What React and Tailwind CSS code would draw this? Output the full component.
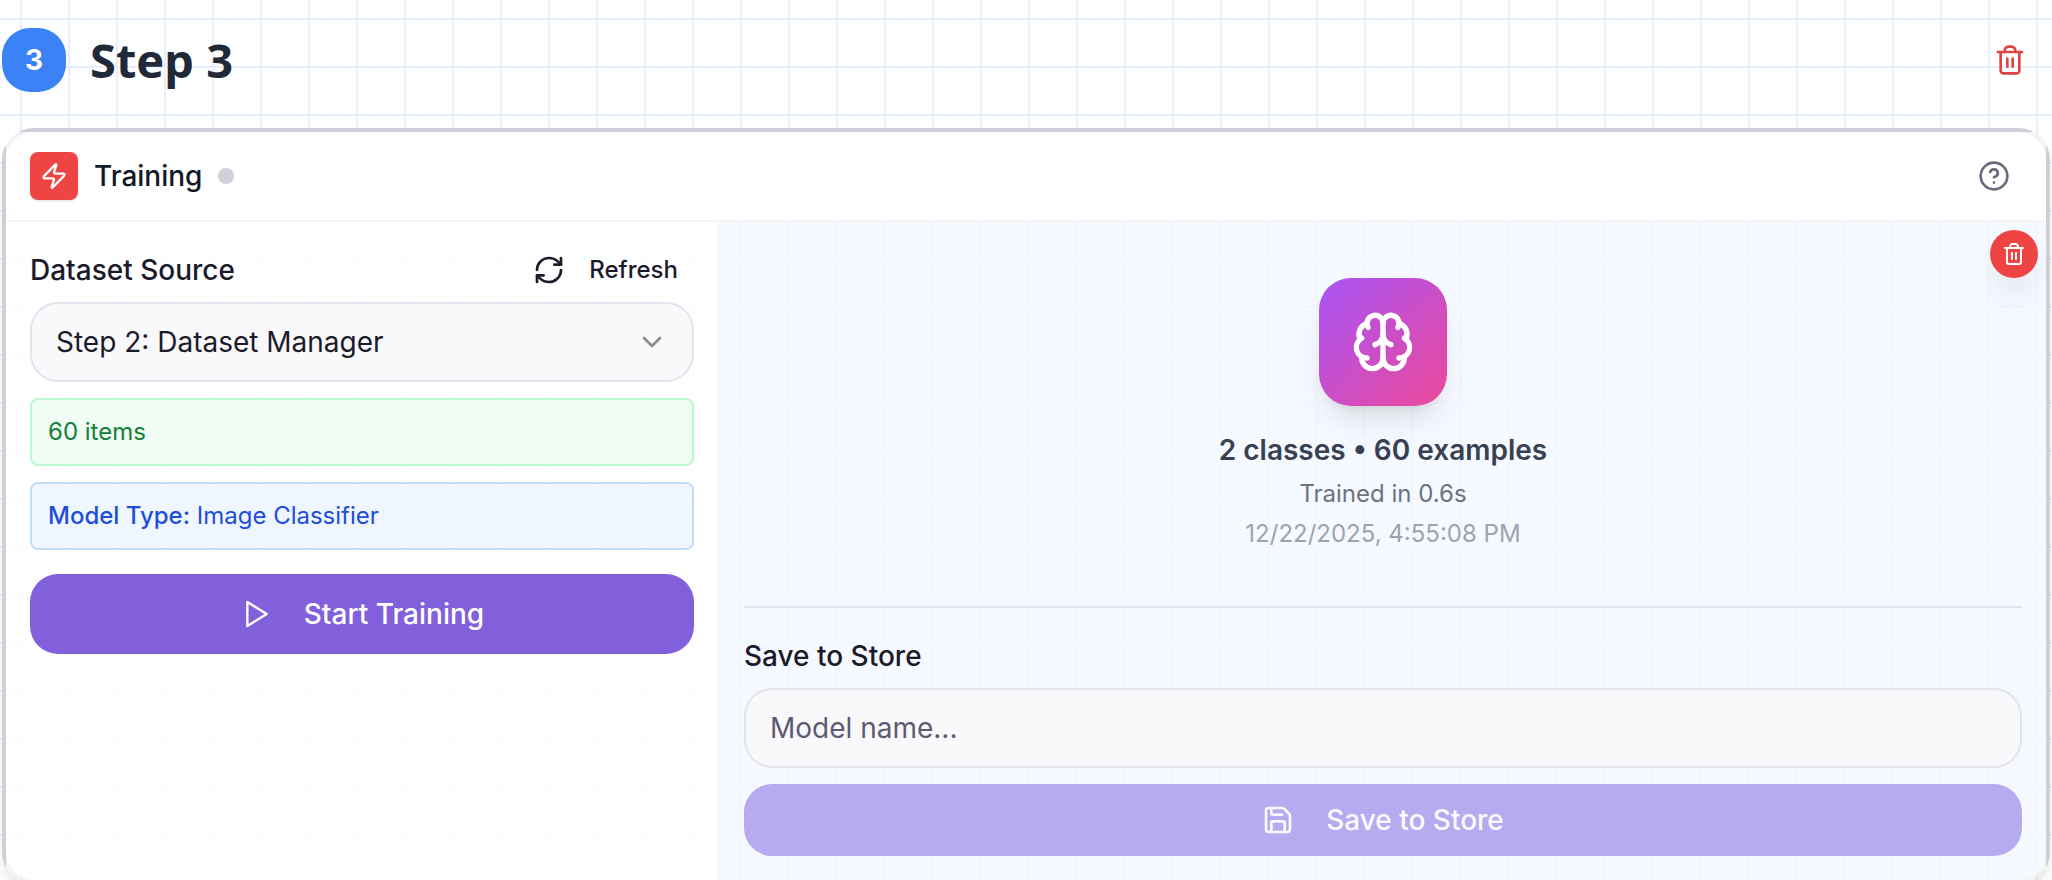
import { useState } from 'react';
import { Zap, CircleHelp, RefreshCw, ChevronDown, Brain, Save } from 'lucide-react';

/** Trash can with two inner bars. */
function TrashIcon({ className }) {
  return (
    <svg viewBox="0 0 24 24" fill="none" stroke="currentColor" strokeWidth="2" strokeLinecap="round" strokeLinejoin="round" className={className}>
      <path d="M3 6h18" />
      <path d="M19 6v14c0 1-1 2-2 2H7c-1 0-2-1-2-2V6" />
      <path d="M8 6V5c0-1.7 1.3-3 3-3h2c1.700 0 3 1.300 3 3v1" />
      <path d="M10 11v6" />
      <path d="M14 11v6" />
    </svg>
  );
}

/** Plain triangle with sharp corners. */
function PlayIcon({ className }) {
  return (
    <svg viewBox="0 0 24 24" fill="none" stroke="currentColor" strokeWidth="1.8" strokeLinejoin="round" className={className}>
      <path d="M5.500 3 20 12 5.500 21Z" />
    </svg>
  );
}

function StepHeader({ number, title }) {
  return (
    <header className="flex h-32 items-center pb-2 pl-0.5 pr-[26px]">
      <span className="flex size-16 items-center justify-center rounded-[28px] bg-[#3b82f6] text-[28px] font-bold text-white">
        {number}
      </span>
      <h1 className="ml-6 font-['Noto_Sans',sans-serif] text-[47px] font-bold leading-none text-[#1f2937]">{title}</h1>
      <button type="button" aria-label="Delete step" className="ml-auto text-[#dc4444]">
        <TrashIcon className="size-8" />
      </button>
    </header>
  );
}

function SourcePanel() {
  const [source, setSource] = useState('step-2');

  return (
    <section className="flex flex-col bg-white/60 p-6">
      <div className="flex h-12 items-center justify-between pr-4">
        <label htmlFor="source" className="text-[28px] font-medium leading-10">Dataset Source</label>
        <button type="button" className="flex items-center gap-6 text-2xl font-medium">
          <RefreshCw className="size-8" />
          Refresh
        </button>
      </div>
      <div className="relative mt-2">
        <select
          id="source"
          value={source}
          onChange={(e) => setSource(e.target.value)}
          className="h-20 w-full appearance-none rounded-[28px] border-2 border-[#e4e4ee] bg-[#f9f9fb] px-6 text-[28px]"
        >
          <option value="step-2">Step 2: Dataset Manager</option>
        </select>
        <ChevronDown className="pointer-events-none absolute right-[26px] top-6 size-8 text-[#8c8c8f]" />
      </div>
      <p className="mt-4 rounded-lg border-2 border-[#bbf7d0] bg-[#f0fdf4] p-4 text-2xl leading-8 text-[#15803d]">60 items</p>
      <p className="mt-4 rounded-lg border-2 border-[#bfdbfe] bg-[#f0f6ff] p-4 text-2xl leading-8 text-[#1d4ed8]">
        <span className="font-medium">Model Type:</span> Image Classifier
      </p>
      <button type="button" className="mt-6 flex h-20 items-center justify-center gap-8 rounded-[28px] bg-[#825fdb] text-[28px] font-medium text-white">
        <PlayIcon className="size-8" />
        Start Training
      </button>
    </section>
  );
}

function ModelPanel() {
  const [name, setName] = useState('');

  return (
    <section className="relative border-l-2 border-[#f3f6fb] bg-[#ebf1ff]/45 px-6 pb-6 pt-14">
      <button type="button" aria-label="Delete model" className="absolute right-2 top-2 flex size-12 items-center justify-center rounded-full bg-[#ef4444] text-white shadow-[0_20px_30px_-6px_rgba(0,0,0,0.1)]">
        <TrashIcon className="size-6" />
      </button>

      <div className="flex flex-col items-center">
        <div className="flex size-32 items-center justify-center rounded-[32px] bg-linear-to-br/srgb from-[#a855f7] to-[#ec4899] text-white shadow-[0_20px_30px_-6px_rgba(0,0,0,0.1),0_8px_12px_-8px_rgba(0,0,0,0.1)]">
          <Brain className="size-16" />
        </div>
        <p className="mt-6 text-[28px] font-semibold leading-10 text-[#374151]">2 classes • 60 examples</p>
        <p className="mt-2 text-2xl leading-8 text-[#6b7280]">Trained in 0.6s</p>
        <p className="mt-2 text-2xl leading-8 text-[#9ca3af]">12/22/2025, 4:55:08 PM</p>
      </div>

      <form className="mt-14 flex flex-col border-t-2 border-[#e3e4ec] pt-7" onSubmit={(e) => e.preventDefault()}>
        <label htmlFor="model-name" className="text-[28px] font-medium leading-10">Save to Store</label>
        <input
          id="model-name"
          type="text"
          value={name}
          onChange={(e) => setName(e.target.value)}
          placeholder="Model name..."
          className="mt-3 h-20 w-full rounded-[28px] border-2 border-[#e4e4ee] bg-[#f9f9fb] px-6 text-[28px] placeholder:text-[#5f5a74]"
        />
        <button
          type="submit"
          disabled={!name}
          className="mt-4 flex h-18 items-center justify-center gap-8 rounded-[28px] bg-[#825fdb] text-[28px] font-medium text-white disabled:bg-[#b8aaee] disabled:text-[#faf9ff]"
        >
          <Save className="size-8" />
          Save to Store
        </button>
      </form>
    </section>
  );
}

export default function App() {
  return (
    <div className="h-screen overflow-hidden bg-white bg-[linear-gradient(to_right,#e6effd_2px,transparent_2px),linear-gradient(to_bottom,#e6effd_2px,transparent_2px)] bg-size-[48px_48px] bg-position-[20px_18px] font-[Inter,sans-serif] text-[#1c1b2b]">
      <StepHeader number={3} title="Step 3" />
      {/* Straight edge strips, cut off by the rounded corners */}
      <main className="mx-0.5 overflow-hidden rounded-[32px] border-4 border-[#9090a0]/10 bg-white/60 bg-[linear-gradient(#d6d6df,#d6d6df),linear-gradient(#d6d6df,#d6d6df),linear-gradient(#d6d6df,#d6d6df)] bg-size-[100%_4px,4px_100%,4px_100%] bg-position-[top,left,right] bg-no-repeat bg-origin-border shadow-lg">
        <div className="flex h-[90px] items-center border-b-2 border-[#f3f4f6] bg-white/80 pl-6 pr-9">
          <span className="flex size-12 items-center justify-center rounded-lg bg-[#ef4444] text-white shadow-sm">
            <Zap className="size-7" />
          </span>
          <h2 className="ml-4 text-[28px] font-medium text-[#111827]">Training</h2>
          <span className="ml-4 size-4 rounded-full bg-[#d1d1da]" />
          <button type="button" aria-label="Help" className="ml-auto text-[#6b6b7b]">
            <CircleHelp className="size-8" />
          </button>
        </div>
        <div className="grid grid-cols-[34.9%_1fr]">
          <SourcePanel />
          <ModelPanel />
        </div>
      </main>
    </div>
  );
}
